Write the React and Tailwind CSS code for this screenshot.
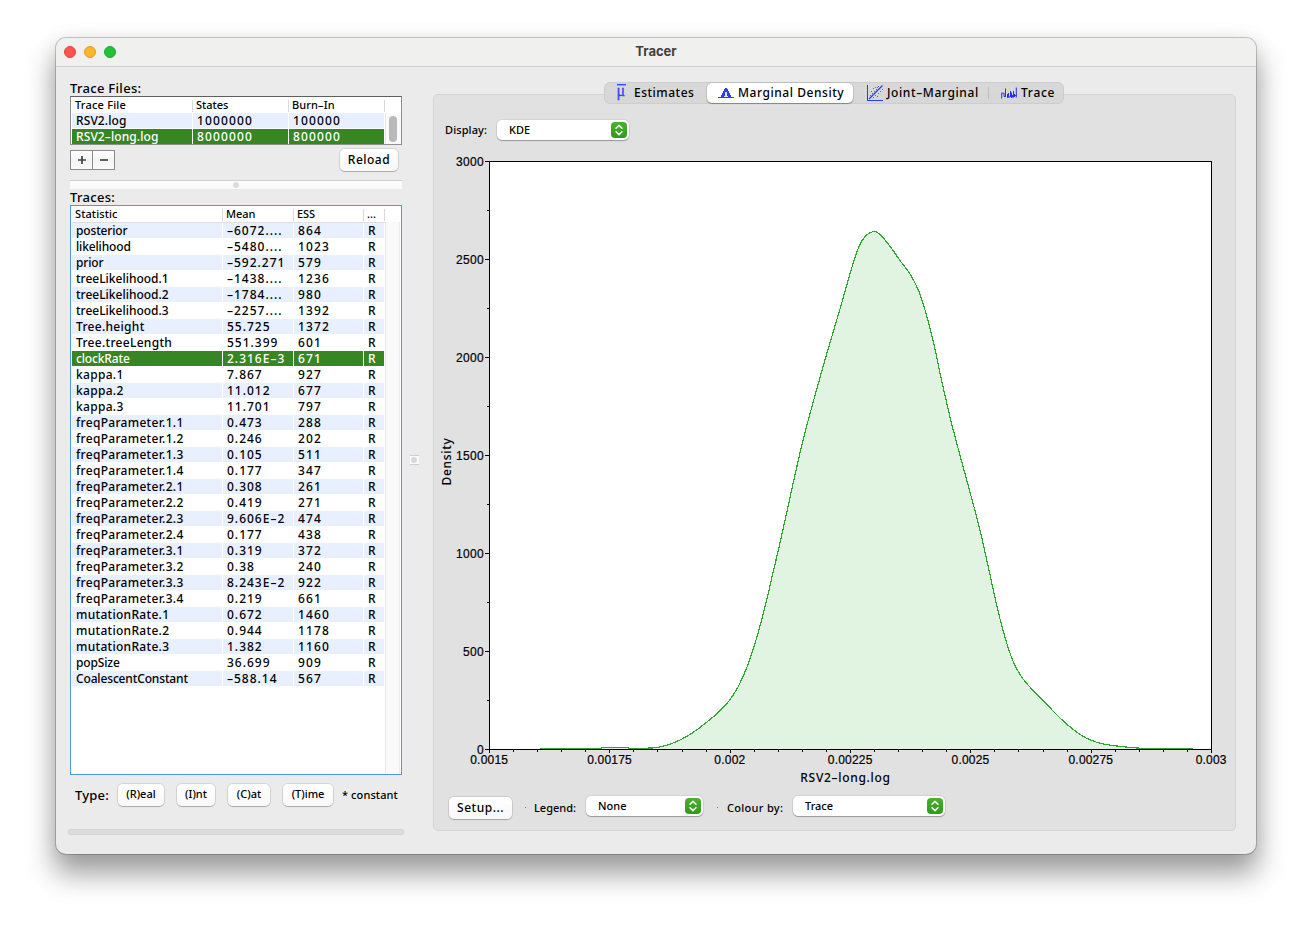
const traceFiles = [
    { name: "RSV2.log", states: "1000000", burnIn: "100000" },
    { name: "RSV2-long.log", states: "8000000", burnIn: "800000", selected: true },
];

const traces = [
    ["posterior", "-6072....", "864"],
    ["likelihood", "-5480....", "1023"],
    ["prior", "-592.271", "579"],
    ["treeLikelihood.1", "-1438....", "1236"],
    ["treeLikelihood.2", "-1784....", "980"],
    ["treeLikelihood.3", "-2257....", "1392"],
    ["Tree.height", "55.725", "1372"],
    ["Tree.treeLength", "551.399", "601"],
    ["clockRate", "2.316E-3", "671"],
    ["kappa.1", "7.867", "927"],
    ["kappa.2", "11.012", "677"],
    ["kappa.3", "11.701", "797"],
    ["freqParameter.1.1", "0.473", "288"],
    ["freqParameter.1.2", "0.246", "202"],
    ["freqParameter.1.3", "0.105", "511"],
    ["freqParameter.1.4", "0.177", "347"],
    ["freqParameter.2.1", "0.308", "261"],
    ["freqParameter.2.2", "0.419", "271"],
    ["freqParameter.2.3", "9.606E-2", "474"],
    ["freqParameter.2.4", "0.177", "438"],
    ["freqParameter.3.1", "0.319", "372"],
    ["freqParameter.3.2", "0.38", "240"],
    ["freqParameter.3.3", "8.243E-2", "922"],
    ["freqParameter.3.4", "0.219", "661"],
    ["mutationRate.1", "0.672", "1460"],
    ["mutationRate.2", "0.944", "1178"],
    ["mutationRate.3", "1.382", "1160"],
    ["popSize", "36.699", "909"],
    ["CoalescentConstant", "-588.14", "567"],
];

// Sampled density outline, in plot coordinates
const density = [
    [540, 748.5], [570, 748.5], [598, 748.4], [604, 747.6], [624, 747.6], [632, 748.4], [645, 748.2], [657, 747.5],
    [669, 744.5], [681, 739.5], [693, 732.5], [705, 723.5], [717, 713.5], [729, 701], [738, 687], [747, 667],
    [756, 640], [765, 607], [772, 577], [780, 543], [787.7, 508], [795, 475], [803.3, 439], [815, 395.5],
    [826.7, 354], [840, 309], [851.7, 268], [859, 246.5], [866, 235.5], [873.5, 231.5], [878, 233], [883.3, 238],
    [892, 249], [900, 260.5], [910, 274], [918.3, 290], [925, 310], [933.3, 341.5], [940, 373], [950, 417],
    [960, 455.5], [976.7, 517], [985, 552], [993.3, 590], [1000, 619], [1006.7, 643],
    [1013.3, 661.7], [1021.7, 677], [1031.7, 689], [1046.7, 704.3], [1060, 718], [1073.3, 729.5],
    [1086.7, 738.3], [1103.3, 744], [1133, 747.7], [1150, 748.4], [1193, 748.5],
];

function smoothPath(pts) {
    let d = `M${pts[0][0]} ${pts[0][1]}`;
    for (let i = 0; i < pts.length - 1; i++) {
        const p0 = pts[i - 1] || pts[i];
        const p1 = pts[i];
        const p2 = pts[i + 1];
        const p3 = pts[i + 2] || p2;
        d += ` C${p1[0] + (p2[0] - p0[0]) / 6} ${p1[1] + (p2[1] - p0[1]) / 6} ${p2[0] - (p3[0] - p1[0]) / 6} ${p2[1] - (p3[1] - p1[1]) / 6} ${p2[0]} ${p2[1]}`;
    }
    return d;
}

function HeaderCell({ className, children }) {
    return (
        <div className={`relative h-4 leading-4 text-[11px] ${className}`}>
            {children}
            <span className="absolute right-0 top-[3px] h-3 w-px bg-[#d9d9d9]" />
        </div>
    );
}

function TraceFileTable() {
    return (
        <div className="flex h-[49px] border border-[#8e8e8e] border-t-[#5f5f5f] bg-white pl-px">
            <div className="w-[313px]">
                <div className="flex h-4">
                    <HeaderCell className="w-[121px] pl-[3px] tracking-[0.2px]">Trace File</HeaderCell>
                    <HeaderCell className="w-[96px] pl-[3px]">States</HeaderCell>
                    <HeaderCell className="w-[96px] pl-[3px] tracking-[0.1px]">Burn–In</HeaderCell>
                </div>
                {traceFiles.map((file) => (
                    <div
                        key={file.name}
                        className={`flex h-4 gap-px pb-px leading-4 ${file.selected ? "text-white" : ""}`}
                    >
                        <div className={`h-[15px] w-[120px] pl-1 tracking-[0.1px] ${file.selected ? "bg-[#378623]" : "bg-[#e8effe]"}`}>{file.name.replace("-", "–")}</div>
                        <div className={`h-[15px] w-[95px] pl-1 tracking-[1.15px] ${file.selected ? "bg-[#378623]" : "bg-[#e8effe]"}`}>{file.states}</div>
                        <div className={`h-[15px] w-[95px] pl-1 tracking-[1.15px] ${file.selected ? "bg-[#378623]" : "bg-[#e8effe]"}`}>{file.burnIn}</div>
                    </div>
                ))}
            </div>
            <div className="mt-4 flex flex-1 justify-center border-l border-[#e6e6e6] bg-[#fafafa] pr-[2px] pt-[3px]">
                <div className="h-[26px] w-2 rounded-full bg-[#b9b9b9]" />
            </div>
        </div>
    );
}

function TracesTable() {
    return (
        <div className="flex h-[570px] border border-[#4a9ae6] bg-white pl-px">
            <div className="w-[313px]">
                <div className="flex h-[17px] border-b border-[#dedede]">
                    <HeaderCell className="w-[151px] pl-[3px] tracking-[0.1px]">Statistic</HeaderCell>
                    <HeaderCell className="w-[71px] pl-[3px] tracking-[-0.1px]">Mean</HeaderCell>
                    <HeaderCell className="w-[70px] pl-[3px] tracking-[-0.1px]">ESS</HeaderCell>
                    <HeaderCell className="w-[21px] pl-[3px]">...</HeaderCell>
                </div>
                {traces.map(([name, mean, ess], i) => {
                    const selected = name === "clockRate";
                    const bg = selected ? "bg-[#378623]" : i % 2 === 0 ? "bg-[#e8effe]" : "bg-white";
                    const tracking = name.startsWith("tree")
                        ? "tracking-[0px]"
                        : name.includes(".") ? "tracking-[0.3px]" : "tracking-[-0.15px]";
                    return (
                        <div key={name} className={`flex h-4 gap-px leading-4 ${selected ? "text-white" : ""}`}>
                            <div className={`h-[15px] w-[150px] pl-1 ${tracking} ${bg}`}>{name}</div>
                            <div className={`h-[15px] w-[70px] pl-1 tracking-[1px] ${bg}`}>{mean.replace("-", "–")}</div>
                            <div className={`h-[15px] w-[69px] pl-1 tracking-[1.15px] ${bg}`}>{ess}</div>
                            <div className={`h-[15px] w-[20px] pl-1 ${bg}`}>R</div>
                        </div>
                    );
                })}
            </div>
            <div className="mt-4 flex-1 border-l border-[#e6e6e6] pr-px">
                <div className="h-full border-r border-[#ececec] bg-[#fafafa]" />
            </div>
        </div>
    );
}

function Button({ className, children }) {
    return (
        <button className={`rounded-[5px] bg-gradient-to-b from-white to-[#f8f8f8] text-center shadow-[0_0_0_1px_rgba(0,0,0,0.09),0_1px_1px_rgba(0,0,0,0.2)] ${className}`}>
            {children}
        </button>
    );
}

function Select({ className, children }) {
    return (
        <div className={`flex h-5 items-center justify-between rounded-[5px] bg-white pl-3 pr-[2px] text-[11px] shadow-[0_0_0_1px_rgba(0,0,0,0.06),0_1px_1px_rgba(0,0,0,0.28)] ${className}`}>
            <span>{children}</span>
            <svg width="16" height="16" viewBox="0 0 16 16" className="rounded-[4px] bg-gradient-to-b from-[#4bb02d] to-[#2f9a17]">
                <path d="M5 6.2 8 3.4l3 2.8M5 9.8l3 2.8 3-2.8" fill="none" stroke="#fff" strokeWidth="1.5" strokeLinecap="round" strokeLinejoin="round" />
            </svg>
        </div>
    );
}

function EstimatesIcon() {
    return (
        <svg width="12" height="20" viewBox="0 0 12 20" className="overflow-visible">
            <rect x="1" y="1" width="9" height="1.4" fill="#3344f5" />
            <text x="0.5" y="13" fontFamily="Liberation Serif, serif" fontSize="16" fill="#3344f5" stroke="#3344f5" strokeWidth="0.3">μ</text>
        </svg>
    );
}

function DensityIcon() {
    return (
        <svg width="16" height="12" viewBox="0 0 16 12" shapeRendering="crispEdges">
            <path d="M0 10h3V8h1V6h1V4h1V2h1V1h2v1h1v2h1v2h1v2h1v2h3v1H0z" fill="#2d3cff" />
            <path d="M7 5h2v4h1v1H6V9h1V6H6z" fill="#dfe2ff" />
        </svg>
    );
}

function JointIcon() {
    return (
        <svg width="16" height="16" viewBox="0 0 16 16">
            <path d="M0 0h1v15h15v1H0z" fill="#2d3cff" />
            <path d="M2 14 15.5 0.5" stroke="#2d3cff" strokeWidth="1.2" />
            <path d="M3 10h1v1H3zM5 8h1v1H5zM4 6h1v1H4zM7 6h1v1H7zM6 3h1v1H6zM9 4h1v1H9zM8 2h1v1H8zM11 1h1v1h-1zM6 12h1v1H6zM8 10h1v1H8zM10 11h1v1h-1zM11 8h1v1h-1zM13 6h1v1h-1zM15 4h1v1h-1zM10 2h1v1h-1z" fill="#5560f0" />
        </svg>
    );
}

function TraceIcon() {
    return (
        <svg width="16" height="14" viewBox="0 0 16 14">
            <path d="M.7 12.5V8M0 7.2h3M3 7v3.5h2M4.500 2.500v8M6.500 8v4M7.500 7v4.500M6 11h3M9.500 5v6M10.500 6.500V12M11.500 9v2.500M12.500 5v6.500M13.500 8v3M15.300 1.500v10M13 9.500h2.500" fill="none" stroke="#2a30ee" strokeWidth="1" />
        </svg>
    );
}

function Tabs() {
    return (
        <div className="absolute left-[170px] top-[-13px] flex h-[22px] w-[460px] items-center rounded-[6px] border border-[#cdcdcd] bg-[#d6d6d6]/90 text-[12px]">
            <div className="flex h-full w-[102px] items-center pl-[11px]">
                <EstimatesIcon />
                <span className="ml-[6px] tracking-[0.5px]">Estimates</span>
            </div>
            <div className="flex h-5 w-[146px] items-center rounded-[5px] bg-white pl-[11px] shadow-[0_0_0_1px_rgba(0,0,0,0.08),0_1px_1px_rgba(0,0,0,0.3)]">
                <DensityIcon />
                <span className="ml-1 tracking-[0.55px]">Marginal Density</span>
            </div>
            <div className="flex h-full w-[135px] items-center pl-[14px]">
                <JointIcon />
                <span className="ml-1 tracking-[0.6px]">Joint–Marginal</span>
            </div>
            <div className="h-3 w-px bg-[#bdbdbd]" />
            <div className="flex h-full items-center pl-3">
                <TraceIcon />
                <span className="ml-1 tracking-[0.7px]">Trace</span>
            </div>
        </div>
    );
}

function DensityPlot() {
    const outline = smoothPath(density);
    const yMinor = Array.from({ length: 13 }, (_, i) => i);
    const xMinor = Array.from({ length: 31 }, (_, i) => i);
    const xLabels = ["0.0015", "0.00175", "0.002", "0.00225", "0.0025", "0.00275", "0.003"];

    return (
        <svg width="801" height="644" viewBox="434 145 801 644" className="block">
            <rect x="489.5" y="161.5" width="722" height="588" fill="#fff" />
            <path d={`${outline} V749.5 H540z`} fill="#e1f3e1" />
            <path d={outline} fill="none" stroke="#2fa62f" strokeWidth="1.2" shapeRendering="crispEdges" />
            <rect x="489.5" y="161.5" width="722" height="588" fill="none" stroke="#000" />
            <g stroke="#000" shapeRendering="crispEdges">
                {yMinor.map((i) => (
                    <line key={i} x1={i % 2 === 0 ? 485 : 487} x2="489" y1={161.5 + i * 49} y2={161.5 + i * 49} />
                ))}
                {xMinor.map((i) => (
                    <line key={i} y1="750" y2={i % 5 === 0 ? 753 : 752} x1={489.5 + (i * 722) / 30} x2={489.5 + (i * 722) / 30} />
                ))}
            </g>
            <g fontFamily="Liberation Sans, Arial, sans-serif" fontSize="12" fontWeight="400" fill="#000" stroke="#000" strokeWidth="0.2">
                {[3000, 2500, 2000, 1500, 1000, 500, 0].map((v, i) => (
                    <text key={v} x="484" y={166 + i * 98} textAnchor="end" letterSpacing="0.3">{v}</text>
                ))}
                {xLabels.map((v, i) => (
                    <text key={v} x={489.2 + (i * 722) / 6} y="764" textAnchor="middle" letterSpacing="0.2">{v}</text>
                ))}
            </g>
            <g fontFamily="Noto Sans, sans-serif" fontSize="12" fill="#000">
                <text x="845.5" y="782" textAnchor="middle" letterSpacing="0.7">RSV2–long.log</text>
                <text transform="translate(451 461.5) rotate(-90)" textAnchor="middle" letterSpacing="0.7">Density</text>
            </g>
        </svg>
    );
}

function LeftPane() {
    return (
        <div className="w-[332px]">
            <div className="h-[15px] text-[13px] leading-[15px] tracking-[0.3px]">Trace Files:</div>
            <TraceFileTable />
            <div className="flex h-[35px] justify-between pt-1 pr-[4px]">
                <div className="mt-px flex h-5 w-[45px] border border-[#8a8a8a] bg-gradient-to-b from-white via-[#f4f4f4] to-[#fafafa]">
                    <div className="flex flex-1 items-center justify-center border-r border-[#8a8a8a]">
                        <svg width="8" height="8" viewBox="0 0 8 8"><path d="M4 0v8M0 4h8" stroke="#444" strokeWidth="1.7" /></svg>
                    </div>
                    <div className="flex flex-1 items-center justify-center">
                        <svg width="8" height="8" viewBox="0 0 8 8"><path d="M0 4h8" stroke="#444" strokeWidth="1.7" /></svg>
                    </div>
                </div>
                <Button className="h-[22px] w-[58px] text-[12px] leading-[22px] tracking-[0.5px]">Reload</Button>
            </div>
            <div className="flex h-[9px] items-center justify-center border-t border-[#d0d0d0] bg-gradient-to-b from-[#fdfdfd] to-[#f8f8f8]">
                <div className="size-[6px] rounded-full bg-[#dcdcdc]" />
            </div>
            <div className="h-4 pt-px text-[13px] leading-[15px] tracking-[0.3px]">Traces:</div>
            <TracesTable />
            <div className="flex h-[54px] pl-[5px] pt-[9px] text-[11px]">
                <span className="w-[43px] text-[13px] leading-[23px] tracking-[0.2px]">Type:</span>
                <Button className="h-[22px] w-[46px] pb-px">(R)eal</Button>
                <Button className="ml-[13px] h-[22px] w-[38px] pb-px">(I)nt</Button>
                <Button className="ml-[13px] h-[22px] w-[42px] pb-px">(C)at</Button>
                <Button className="ml-[13px] h-[22px] w-[50px] pb-px">(T)ime</Button>
                <span className="ml-[9px] whitespace-nowrap leading-[22px] tracking-[0.1px]">* constant</span>
            </div>
            <div className="mx-[-2px] h-[6px] rounded-full bg-[#dcdcdc] shadow-[inset_0_0_0_1px_#d5d5d5]" />
        </div>
    );
}

function RightPane() {
    return (
        <div className="relative mt-[13px] h-[737px] w-[803px] rounded-[5px] border border-[#d5d5d5] bg-[#e1e1e1]">
            <Tabs />
            <div className="flex h-[50px] items-center pl-[11px] pt-[20px] text-[11px]">
                <span className="w-[52px] pt-px tracking-[0.1px]">Display:</span>
                <Select className="w-[132px]">KDE</Select>
            </div>
            <DensityPlot />
            <div className="flex items-center pl-[15px] pt-[6px] text-[11px]">
                <Button className="mt-[2px] h-[22px] w-[63px] text-[12px] tracking-[0.5px]">Setup...</Button>
                <span className="ml-[13px] size-px bg-[#777]" />
                <span className="ml-2 w-[52px] pt-[3px]">Legend:</span>
                <Select className="mb-[2px] w-[117px]">None</Select>
                <span className="ml-[14px] size-px bg-[#777]" />
                <span className="ml-[9px] w-[66px] whitespace-nowrap pt-[3px] tracking-[0.3px]">Colour by:</span>
                <Select className="mb-[2px] w-[152px]">Trace</Select>
            </div>
        </div>
    );
}

function App() {
    return (
        <div className="h-[928px] w-[1312px] overflow-hidden bg-white pl-14 pt-[38px] font-['Noto_Sans','Open_Sans',sans-serif] text-[12px] font-medium text-black">
            <div className="h-[816px] w-[1200px] rounded-[10px] bg-[#ebebeb] shadow-[0_0_0_1px_rgba(0,0,0,0.2),0_18px_28px_2px_rgba(0,0,0,0.38),0_0_20px_rgba(0,0,0,0.06)]">
                <div className="relative flex h-[29px] items-center justify-center rounded-t-[10px] border-b border-[#cfcfcf] bg-[#f0f0ef]">
                    <div className="absolute left-2 flex gap-2">
                        <div className="size-3 rounded-full border border-[#e0443e] bg-[#ff5550]" />
                        <div className="size-3 rounded-full border border-[#df9d24] bg-[#fdb62c]" />
                        <div className="size-3 rounded-full border border-[#1aab29] bg-[#24c138]" />
                    </div>
                    <h1 className="font-['Inter',sans-serif] text-[13px] font-bold text-[#3f3f3f]">Tracer</h1>
                </div>
                <div className="flex pl-[14px] pt-[14px]">
                    <LeftPane />
                    <div className="flex h-[756px] w-[31px] items-center justify-center pr-[7px]">
                        <div className="mt-[2px] flex h-[10px] w-[9px] items-center justify-center border-y border-[#d0d0d0] bg-[#f9f9f9]">
                            <div className="size-[6px] rounded-full bg-[#d8d8d8]" />
                        </div>
                    </div>
                    <RightPane />
                </div>
            </div>
        </div>
    );
}

export default App;
